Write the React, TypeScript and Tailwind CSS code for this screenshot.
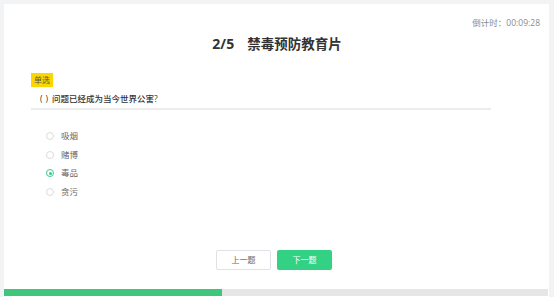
const options = [
  { key: "a", label: "吸烟" },
  { key: "b", label: "赌博" },
  { key: "c", label: "毒品" },
  { key: "d", label: "贪污" },
];

const selected = "c";
const progress = (218 / 544) * 100;

export default function App() {
  return (
    <div
      className="h-[297px] overflow-hidden bg-[#f2f3f5] pt-[4px] pl-[4px] pr-[5px]"
      style={{ fontFamily: '"Open Sans", "Noto Sans CJK SC", sans-serif' }}
    >
      <div className="flex h-[300px] flex-col bg-white">
        <div className="mt-[14px] h-[10px] pr-[9px] text-right text-[8.5px] leading-[10px] text-[#8a8a8a]">
          倒计时：00:09:28
        </div>

        <h1 className="mt-[8px] flex h-[16px] items-center justify-center pl-[1px] font-bold leading-[16px] text-[#333]">
          <span className="text-[14px]">2/5</span>
          <span className="ml-[13px] text-[13.5px]">禁毒预防教育片</span>
        </h1>

        <div className="ml-[27px] mt-[21px] w-[460px]">
          <div className="h-[14px] w-fit bg-[#fcd600] px-[3px] text-[8px] leading-[14px] text-[#555]">
            单选
          </div>
          <p className="mt-[6px] flex h-[17px] items-start border-b-2 border-[#ececec] pl-[9px] text-[8.5px] font-medium leading-[12px] text-[#333]">
            <span>(</span>
            <span className="ml-[3px]">)</span>
            <span className="ml-[4px]">问题已经成为当今世界公害?</span>
          </p>

          <ul className="mt-[17px] pl-[15px]">
            {options.map((o) => {
              const checked = o.key === selected;
              return (
                <li key={o.key} className="flex h-[18.6px] items-center gap-[7px]">
                  <span
                    className={
                      checked
                        ? "flex h-[8px] w-[8px] items-center justify-center rounded-full border border-[#3cc88a]"
                        : "h-[8px] w-[8px] rounded-full border border-[#dcdcdc]"
                    }
                  >
                    {checked && <span className="h-[3px] w-[3px] rounded-full bg-[#3cc88a]" />}
                  </span>
                  <span className="text-[8.5px] leading-[12px] text-[#666]">{o.label}</span>
                </li>
              );
            })}
          </ul>
        </div>

        <div className="mt-[49px] flex justify-center gap-[6px] pr-[5px]">
          <button className="h-[20px] w-[55px] rounded-[2px] border border-[#dfe1e6] bg-white text-[8px] text-[#666]">
            上一题
          </button>
          <button className="h-[20px] w-[55px] rounded-[2px] bg-[#32d183] text-[8px] text-white">
            下一题
          </button>
        </div>

        <div className="mt-[19px] h-[7px] w-[544px] bg-[#e6e6e6]">
          <div className="h-full bg-[#3ec67c]" style={{ width: `${progress}%` }} />
        </div>
      </div>
    </div>
  );
}
